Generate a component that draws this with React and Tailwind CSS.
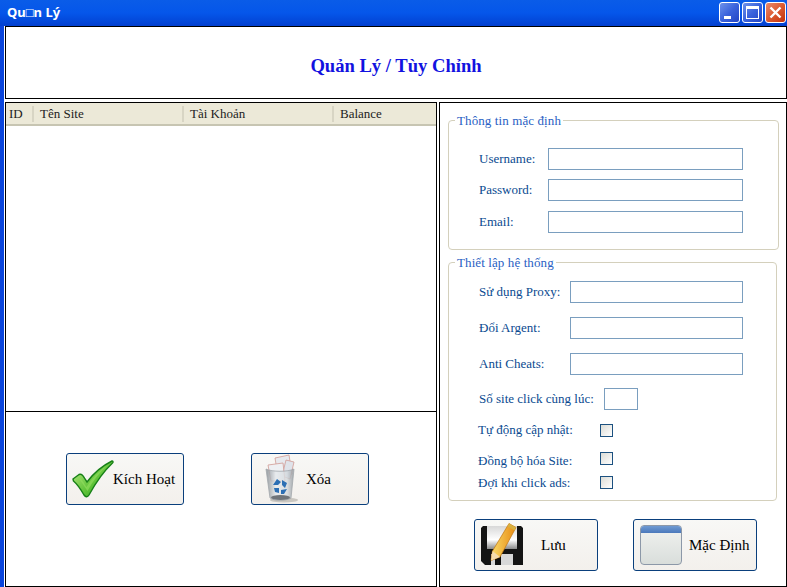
const serif = { fontFamily: '"Liberation Serif", "Noto Sans CJK SC", serif' };

const TitleButton = ({ close, children }) => (
  <div
    className={`flex h-[21px] w-[21px] items-center justify-center rounded-[3px] border border-white ${
      close
        ? 'bg-gradient-to-br from-[#e88a6c] via-[#dc5a30] to-[#c22f08]'
        : 'bg-gradient-to-br from-[#6f91ea] via-[#3a62dc] to-[#2344c4]'
    }`}
  >
    {children}
  </div>
);

const CheckIcon = () => (
  <svg width="42" height="38" viewBox="0 0 42 38" className="shrink-0">
    <defs>
      <linearGradient id="chk" x1="0" y1="0" x2="1" y2="1">
        <stop offset="0" stopColor="#c4ee8e" />
        <stop offset="0.55" stopColor="#62c43a" />
        <stop offset="1" stopColor="#1f9a1a" />
      </linearGradient>
    </defs>
    <path
      d="M1 19 L7 14.500 C9 13.500 11 15 13 19 L15 22 C21 14 30 6 40 1 C41 1 41.500 2 40.500 3 C32 11 23 24 17 35 C15.500 37.500 13.500 37 12 35 C8 28 5 24 1.500 21 Z"
      fill="url(#chk)"
      stroke="#178017"
      strokeWidth="1.400"
    />
    <path d="M6 18 C9 17 12 23 14.500 27 C20 18 27 11 35 5.500 C27 13 21 21 15.500 31 C12 26 9 21 6 18 Z" fill="#8fdc5c" opacity="0.700" />
  </svg>
);

const BinIcon = () => (
  <svg width="34" height="50" viewBox="0 0 34 50" className="shrink-0">
    <defs>
      <linearGradient id="bin" x1="0" y1="0" x2="1" y2="0">
        <stop offset="0" stopColor="#7f868c" />
        <stop offset="0.35" stopColor="#e6eaed" />
        <stop offset="0.75" stopColor="#d5dade" />
        <stop offset="1" stopColor="#8e959a" />
      </linearGradient>
    </defs>
    <ellipse cx="20" cy="46" rx="14" ry="2.500" fill="#c9c6c0" />
    <path d="M11 4 L25 1 L28 20 L14 22 Z" fill="#e7e9ee" stroke="#d09a94" strokeWidth="0.800" />
    <path d="M22 6 L30 8 L26 25 L18 22 Z" fill="#dfe3ea" stroke="#d09a94" strokeWidth="0.800" />
    <path d="M4 11 L19 9 L21 27 L7 27 Z" fill="#eef0f3" stroke="#d09a94" strokeWidth="0.800" />
    <path d="M2 15 C8 18 24 18 30 15 L27 44 C22 47 10 47 6 44 Z" fill="url(#bin)" opacity="0.800" stroke="#8f969c" strokeWidth="0.800" />
    <path d="M9 31 L13 25 L17 28 L14 31 Z M18 26 L23 29 L21 34 L18 31 Z M10 34 L15 34 L15 39 L11 38 Z M17 36 L23 35 L20 40 L17 40 Z" fill="#2c6fb4" />
    <ellipse cx="16.500" cy="43.500" rx="9.500" ry="2.500" fill="#6f7479" />
  </svg>
);

const SaveIcon = () => (
  <svg width="44" height="44" viewBox="0 0 44 44" className="shrink-0">
    <defs>
      <linearGradient id="disk" x1="0" y1="0" x2="0" y2="1">
        <stop offset="0" stopColor="#d8d8d8" />
        <stop offset="0.6" stopColor="#ffffff" />
        <stop offset="1" stopColor="#8a8a8a" />
      </linearGradient>
      <linearGradient id="pen" x1="0" y1="0" x2="1" y2="0">
        <stop offset="0" stopColor="#f9dc6a" />
        <stop offset="1" stopColor="#e88a12" />
      </linearGradient>
    </defs>
    <path d="M3 3 H41 L43 5 V42 H5 L1 38 V5 Z" fill="#141414" />
    <rect x="7" y="3" width="30" height="23" fill="url(#disk)" />
    <rect x="11" y="31" width="22" height="11" fill="#d8d8d8" />
    <rect x="15" y="32" width="6" height="10" fill="#111111" />
    <path d="M29 0.500 L36 4.500 L20 34 L11 37.500 L12.500 28 Z" fill="url(#pen)" stroke="#c07410" strokeWidth="0.700" />
    <path d="M29 0.500 L36 4.500 L34.500 7.500 L27.500 3.500 Z" fill="#d8b040" />
    <path d="M12.500 28 L20 34 L11 37.500 Z" fill="#f5dcae" />
  </svg>
);

const WindowIcon = () => (
  <div className="flex h-[40px] w-[42px] shrink-0 flex-col overflow-hidden rounded-[4px] border border-[#8c98a8] bg-gradient-to-b from-[#f1f2f0] to-[#d9dedb]">
    <div className="h-[7px] bg-gradient-to-b from-[#6f9ad2] to-[#4a78bb]" />
  </div>
);

const ActionButton = ({ width, icon, label }) => (
  <button
    type="button"
    style={serif}
    className={`flex h-[52px] items-center rounded-[3px] border border-[#0a3f7c] bg-gradient-to-b from-[#f8f8f6] to-[#f3f0ec] text-[15px] leading-none text-black ${width}`}
  >
    {icon}
    <span>{label}</span>
  </button>
);

const Field = ({ label, inputClass, rowClass }) => (
  <div className={`flex items-center ${rowClass}`}>
    <span className="text-[13px] text-[#0a4a90]">{label}</span>
    <div className={`h-[22px] border border-[#7a9ebf] bg-white ${inputClass}`} />
  </div>
);

const CheckRow = ({ label, rowClass, labelClass }) => (
  <div className={`flex h-[14px] items-center ${rowClass}`}>
    <span className={`-ml-[1px] w-[122px] text-[13px] text-[#0a4a90] ${labelClass || ''}`}>{label}</span>
    <div className="h-[13px] w-[13px] border border-[#1c5180] bg-gradient-to-br from-[#dcdcd6] to-white" />
  </div>
);

const App = () => {
  return (
    <div style={serif} className="flex h-[587px] w-[787px] flex-col overflow-hidden bg-white">
      <div className="flex h-[26px] shrink-0 items-center justify-between bg-gradient-to-b from-[#0a5ce8] via-[#0556ea] to-[#0340d0] pl-[7px] pr-[1px]">
        <span className="text-[13px] font-bold text-white" style={{ fontFamily: '"Noto Sans", sans-serif' }}>
          Qu□n Lý
        </span>
        <div className="flex gap-[2px] pb-[2px]">
          <TitleButton>
            <div className="mt-[10px] mr-[5px] h-[3px] w-[7px] bg-white" />
          </TitleButton>
          <TitleButton>
            <div className="h-[13px] w-[13px] border border-t-[3px] border-white" />
          </TitleButton>
          <TitleButton close>
            <svg width="13" height="13" viewBox="0 0 13 13">
              <path d="M1.500 1.500 L11.500 11.500 M11.500 1.500 L1.500 11.500" stroke="white" strokeWidth="2.400" />
            </svg>
          </TitleButton>
        </div>
      </div>

      <div className="flex min-h-0 flex-1 border-l-[4px] border-[#0a45dc] pl-[1px]">
        <div className="flex min-w-0 flex-1 flex-col gap-[3px]">
          <div className="flex h-[73px] shrink-0 items-center justify-center border border-black pt-[7px]">
            <h1 className="text-[18.6px] font-bold text-[#1212e0]">Quản Lý / Tùy Chỉnh</h1>
          </div>

          <div className="flex min-h-0 flex-1 gap-[2px]">
            <div className="flex w-[432px] shrink-0 flex-col border border-black">
              <div className="flex-1">
                <div className="flex h-[23px] items-center border-b-[2px] border-[#c7c5b2] bg-[#ece9d8] text-[13px] text-[#222222]">
                  <span className="w-[28px] shrink-0 border-r-[2px] border-[#d8d5c4] pl-[3px] leading-[16px]">ID</span>
                  <span className="w-[150px] shrink-0 border-r-[2px] border-[#d8d5c4] pl-[6px] leading-[16px]">Tên Site</span>
                  <span className="w-[150px] shrink-0 border-r-[2px] border-[#d8d5c4] pl-[6px] leading-[16px]">Tài Khoản</span>
                  <span className="pl-[6px] leading-[16px]">Balance</span>
                </div>
              </div>
              <div className="flex h-[175px] shrink-0 items-start gap-[67px] border-t border-black pl-[60px] pt-[41px]">
                <ActionButton
                  width="w-[118px]"
                  icon={<div className="ml-[5px] -mr-[1px]"><CheckIcon /></div>}
                  label="Kích Hoạt"
                />
                <ActionButton
                  width="w-[118px]"
                  icon={<div className="ml-[12px] mr-[8px]"><BinIcon /></div>}
                  label="Xóa"
                />
              </div>
            </div>

            <div className="flex min-w-0 flex-1 flex-col border border-black pl-[8px]">
              <fieldset className="mt-[10px] h-[137px] w-[331px] rounded-[4px] border border-[#d4d0bc] pb-0 pl-[30px] pr-0 pt-0">
                <legend className="-ml-[24px] px-[2px] text-[13px] leading-[15px] tracking-[0.1px] text-[#2a5fc4]">Thông tin mặc định</legend>
                <Field label="Username:" rowClass="mt-[20px] w-[264px] justify-between" inputClass="w-[195px]" />
                <Field label="Password:" rowClass="mt-[9px] w-[264px] justify-between" inputClass="w-[195px]" />
                <Field label="Email:" rowClass="mt-[10px] w-[264px] justify-between" inputClass="w-[195px]" />
              </fieldset>

              <fieldset className="mt-[5px] h-[246px] w-[329px] rounded-[4px] border border-[#d4d0bc] pb-0 pl-[30px] pr-0 pt-0">
                <legend className="-ml-[24px] px-[2px] text-[13px] leading-[15px] tracking-[0.1px] text-[#2a5fc4]">Thiết lập hệ thống</legend>
                <Field label="Sử dụng Proxy:" rowClass="mt-[11px] justify-between w-[264px]" inputClass="w-[173px]" />
                <Field label="Đổi Argent:" rowClass="mt-[14px] justify-between w-[264px]" inputClass="w-[173px]" />
                <Field label="Anti Cheats:" rowClass="mt-[14px] justify-between w-[264px]" inputClass="w-[173px]" />
                <Field label="Số site click cùng lúc:" rowClass="mt-[13px] justify-between w-[159px]" inputClass="w-[34px]" />
                <CheckRow label="Tự động cập nhật:" rowClass="mt-[13px]" />
                <CheckRow label="Đồng bộ hóa Site:" rowClass="mt-[14px]" labelClass="mt-[5px]" />
                <CheckRow label="Đợi khi click ads:" rowClass="mt-[10px]" labelClass="mt-[1px]" />
              </fieldset>

              <div className="mt-[18px] flex gap-[35px] pl-[26px]">
                <ActionButton
                  width="w-[124px]"
                  icon={<div className="ml-[5px] mr-[17px]"><SaveIcon /></div>}
                  label="Lưu"
                />
                <ActionButton
                  width="w-[124px]"
                  icon={<div className="ml-[6px] mr-[7px]"><WindowIcon /></div>}
                  label="Mặc Định"
                />
              </div>
            </div>
          </div>
        </div>
      </div>
    </div>
  );
};

export default App;
